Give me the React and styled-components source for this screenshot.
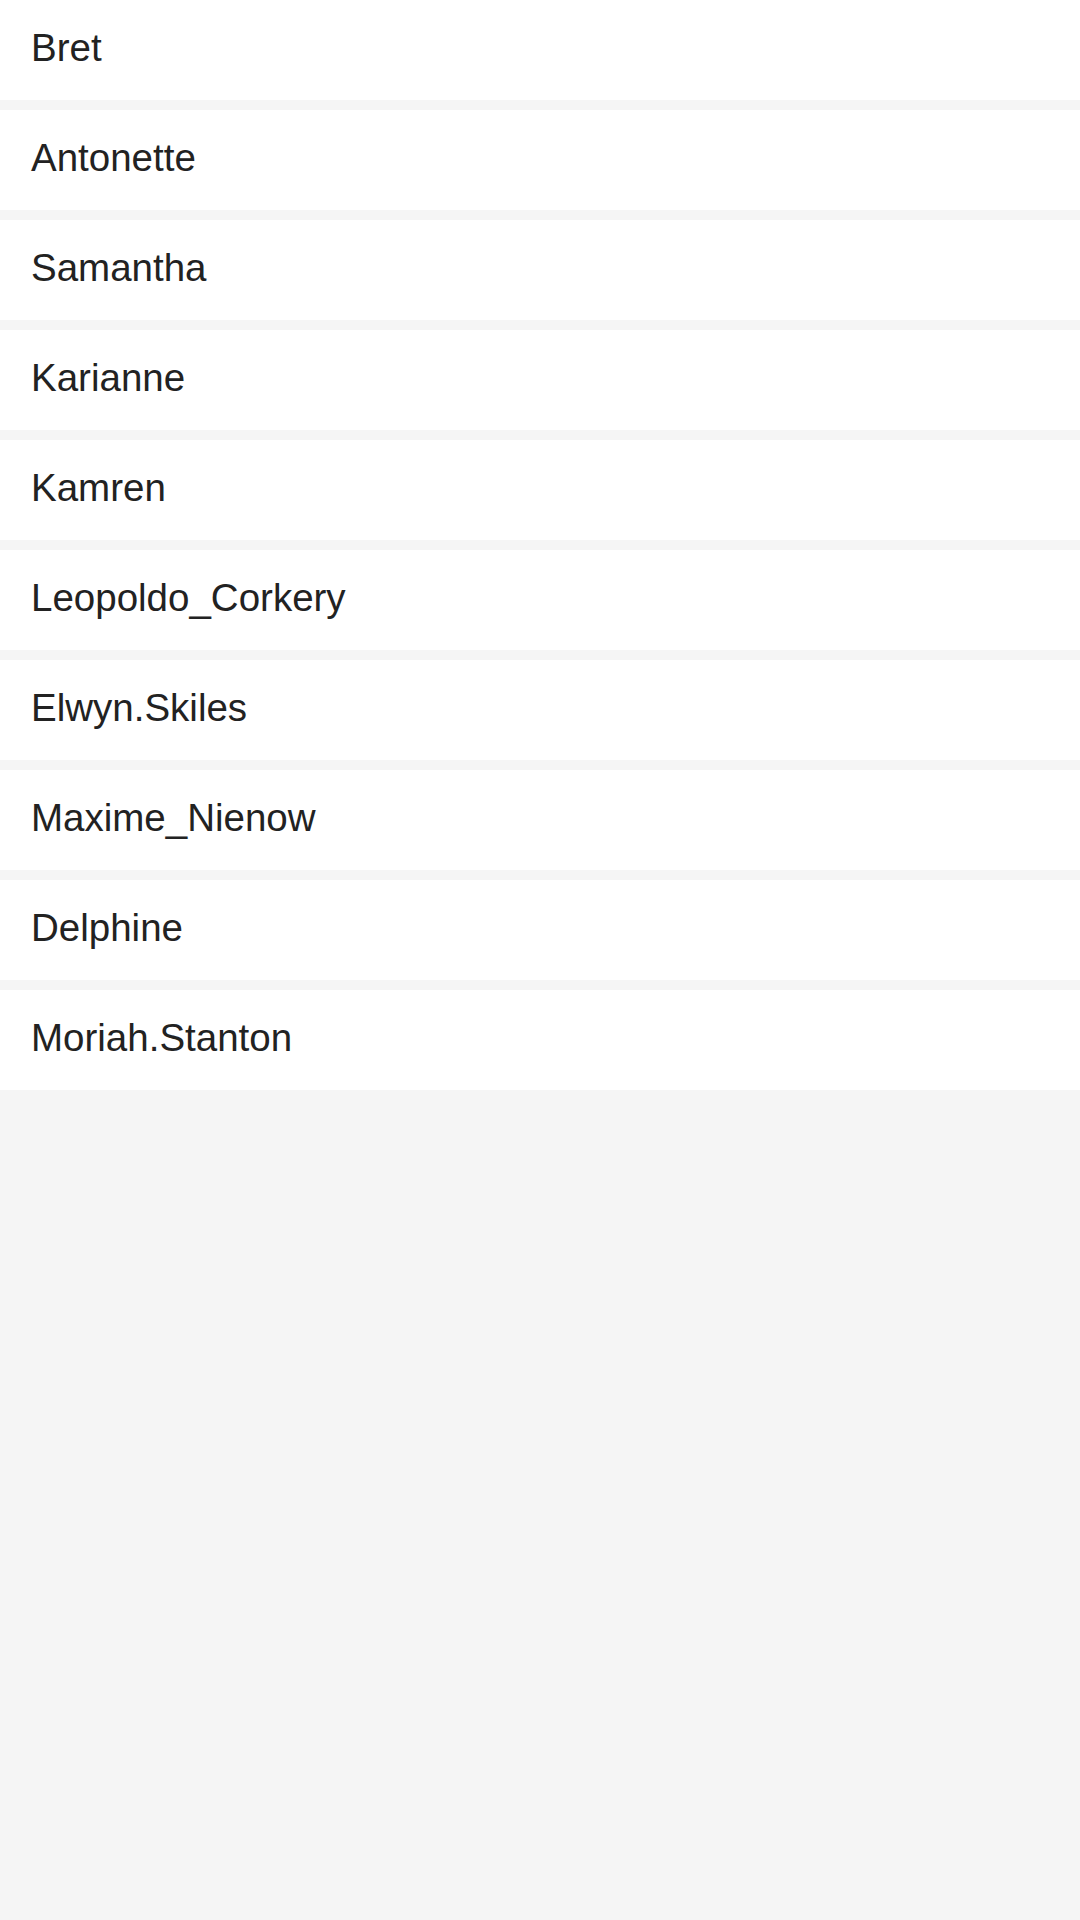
import React from "react";
import styled, { createGlobalStyle } from "styled-components";

const GlobalStyle = createGlobalStyle`
  html, body {
    margin: 0;
    padding: 0;
    background: #f5f5f5;
    font-family: "Liberation Sans", Arial, sans-serif;
  }
`;

const users = [
  "Bret",
  "Antonette",
  "Samantha",
  "Karianne",
  "Kamren",
  "Leopoldo_Corkery",
  "Elwyn.Skiles",
  "Maxime_Nienow",
  "Delphine",
  "Moriah.Stanton",
];

const App = () => {
  return (
    <>
      <GlobalStyle />
      <Page>
        <List>
          {users.map((name) => (
            <Row key={name}>{name}</Row>
          ))}
        </List>
      </Page>
    </>
  );
};

export default App;

const Page = styled.div`
  min-height: 1920px;
  background: #f5f5f5;
`;

const List = styled.div`
  display: flex;
  flex-direction: column;
  gap: 10px;
`;

const Row = styled.div`
  height: 95px;
  padding: 0 31px 5px;
  line-height: 95px;
  background: #fff;
  color: #222;
  font-size: 38.5px;
`;
